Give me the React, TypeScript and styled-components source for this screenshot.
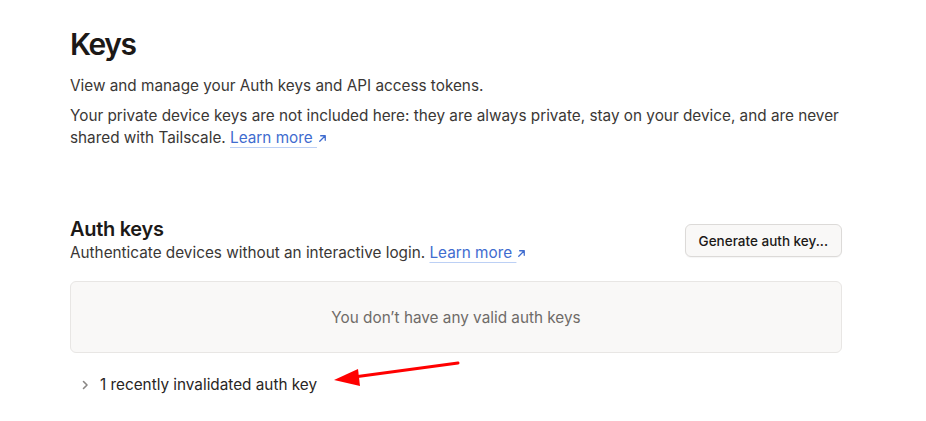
import styled, { createGlobalStyle } from "styled-components";

const GlobalStyle = createGlobalStyle`
    body {
        margin: 0;
        background: #ffffff;
        font-family: Inter, "Noto Sans", sans-serif;
        color: #292524;
    }
`;

// 외부 링크 화살표
function ExternalArrow() {
    return (
        <LinkIcon width="11" height="11" viewBox="0 0 12 12" fill="none">
            <path d="M3 9L9 3M4 3h5v5" stroke="currentColor" strokeWidth="1.4" strokeLinecap="round" strokeLinejoin="round" />
        </LinkIcon>
    );
}

function LearnMore() {
    return (
        <Link href="#">
            Learn more <ExternalArrow />
        </Link>
    );
}

export default function App() {
    return (
        <>
            <GlobalStyle />
            <Page>
                <Title>Keys</Title>
                <Intro>View and manage your Auth keys and API access tokens.</Intro>
                <Intro>
                    Your private device keys are not included here: they are always private, stay on your device, and are never
                    shared with Tailscale. <LearnMore />
                </Intro>

                <Section>
                    <SectionHead>
                        <div>
                            <SectionTitle>Auth keys</SectionTitle>
                            <SectionDesc>
                                Authenticate devices without an interactive login. <LearnMore />
                            </SectionDesc>
                        </div>
                        <Button>Generate auth key...</Button>
                    </SectionHead>
                    <EmptyBox>You don’t have any valid auth keys</EmptyBox>
                    <Collapse>
                        <svg width="10" height="12" viewBox="0 0 10 12" fill="none">
                            <path d="M3.5 2.5l3.5 3.5-3.5 3.5" stroke="#8a8785" strokeWidth="1.6" strokeLinecap="round" strokeLinejoin="round" />
                        </svg>
                        <span>1 recently invalidated auth key</span>
                        <Annotation width="130" height="30" viewBox="0 0 130 30">
                            <line x1="126" y1="3" x2="22" y2="17" stroke="#ff0000" strokeWidth="3" strokeLinecap="round" />
                            <polygon points="2,20 26,9 28,26" fill="#ff0000" />
                        </Annotation>
                    </Collapse>
                </Section>
            </Page>
        </>
    );
}

// style
const Page = styled.div`
    width: 772px;
    padding: 24px 0 0 70px;
`;

const Title = styled.h1`
    margin: 0 0 11px;
    font-size: 30px;
    font-weight: 600;
    line-height: 40px;
    letter-spacing: -1.4px;
    color: #1c1917;
`;

const Intro = styled.p`
    margin: 0 0 8px;
    font-size: 15.3px;
    line-height: 22px;
    color: #3a3735;
`;

const Link = styled.a`
    color: #3f6ccf;
    text-decoration: underline;
    text-decoration-color: #bcd0f5;
    text-decoration-thickness: 1px;
    text-underline-offset: 4px;
`;

const LinkIcon = styled.svg`
    vertical-align: -1px;
`;

const Section = styled.section`
    margin-top: 68px;
`;

const SectionHead = styled.div`
    display: flex;
    justify-content: space-between;
    align-items: center;
    margin-bottom: 17px;
`;

const SectionTitle = styled.h2`
    margin: 0 0 1px;
    font-size: 20px;
    font-weight: 600;
    line-height: 24px;
    letter-spacing: -0.3px;
    color: #1c1917;
`;

const SectionDesc = styled.p`
    margin: 0;
    font-size: 15.3px;
    line-height: 22px;
    color: #3a3735;
`;

const Button = styled.button`
    height: 33px;
    padding: 0 13px;
    border: 1px solid #dcdad8;
    border-radius: 6px;
    background: #f9f8f7;
    font-family: Inter, "Noto Sans", sans-serif;
    font-size: 13.5px;
    font-weight: 500;
    color: #1c1917;
    box-shadow: 0 1px 1px rgba(0, 0, 0, 0.04);
`;

const EmptyBox = styled.div`
    height: 70px;
    display: flex;
    align-items: center;
    justify-content: center;
    border: 1px solid #e8e6e4;
    border-radius: 6px;
    background: #f9f8f7;
    font-size: 15.3px;
    color: #6f6b68;
`;

const Collapse = styled.div`
    position: relative;
    display: flex;
    align-items: center;
    gap: 10px;
    margin-top: 22px;
    padding-left: 10px;
    font-size: 15.3px;
    color: #292524;
`;

const Annotation = styled.svg`
    position: absolute;
    left: 262px;
    top: -15px;
`;
